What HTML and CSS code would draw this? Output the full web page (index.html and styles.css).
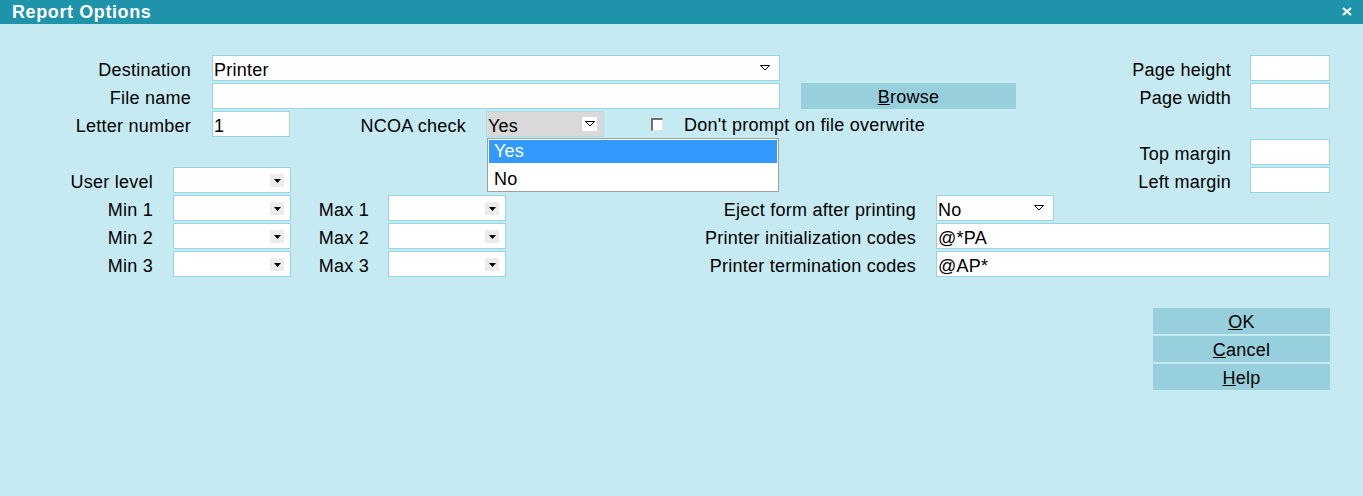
FILE: index.html
```html
<!DOCTYPE html>
<html lang="en">
  <head>
    <meta charset="UTF-8" />
    <title>Report Options</title>
    <link rel="stylesheet" href="styles.css">
  </head>
  <body>
    <div class="dialog">
      <!-- title bar -->
      <div class="titleBar">
        <span class="title">Report Options</span>
        <svg class="closeBtn" width="10" height="9" viewBox="0 0 10 9"><path d="M1 1 L9 8 M9 1 L1 8" stroke="#fff" stroke-width="2.2"/></svg>
      </div>

      <div class="formBody">
        <div class="row">
          <label class="lbl lblA">Destination</label>
          <div class="field wide sel">Printer
            <svg class="arrowOpen" width="10" height="6" viewBox="0 0 10 6"><path d="M0.5 0.5 H9.5 L5 5 Z" fill="none" stroke="#000"/></svg>
          </div>
          <div class="side">
            <label class="lbl lblR">Page height</label>
            <div class="field num"></div>
          </div>
        </div>

        <div class="row">
          <label class="lbl lblA">File name</label>
          <div class="field wide"></div>
          <div class="btn browse"><u>B</u>rowse</div>
          <div class="side">
            <label class="lbl lblR">Page width</label>
            <div class="field num"></div>
          </div>
        </div>

        <div class="row">
          <label class="lbl lblA">Letter number</label>
          <div class="field short">1</div>
          <label class="lbl lblNcoa">NCOA check</label>
          <div class="field combo grey sel">Yes
            <span class="arrowBox white"><svg width="10" height="6" viewBox="0 0 10 6"><path d="M0.5 0.5 H9.5 L5 5 Z" fill="none" stroke="#000"/></svg></span>
            <!-- open list of the NCOA combo -->
            <div class="listBox">
              <div class="item active">Yes</div>
              <div class="item">No</div>
            </div>
          </div>
          <span class="checkBox"></span>
          <span class="checkText">Don't prompt on file overwrite</span>
        </div>

        <div class="row">
          <div class="side">
            <label class="lbl lblR">Top margin</label>
            <div class="field num"></div>
          </div>
        </div>

        <div class="row">
          <label class="lbl lblB">User level</label>
          <div class="field combo sel">
            <span class="arrowBox"><svg width="7" height="4" viewBox="0 0 7 4"><path d="M0 0 H7 L3.5 4 Z" fill="#000"/></svg></span>
          </div>
          <div class="side">
            <label class="lbl lblR">Left margin</label>
            <div class="field num"></div>
          </div>
        </div>

        <div class="row">
          <label class="lbl lblB">Min 1</label>
          <div class="field combo sel">
            <span class="arrowBox"><svg width="7" height="4" viewBox="0 0 7 4"><path d="M0 0 H7 L3.5 4 Z" fill="#000"/></svg></span>
          </div>
          <label class="lbl lblMax">Max 1</label>
          <div class="field combo sel">
            <span class="arrowBox"><svg width="7" height="4" viewBox="0 0 7 4"><path d="M0 0 H7 L3.5 4 Z" fill="#000"/></svg></span>
          </div>
          <label class="lbl lblPrn">Eject form after printing</label>
          <div class="field combo sel">No
            <svg class="arrowOpen" width="10" height="6" viewBox="0 0 10 6"><path d="M0.5 0.5 H9.5 L5 5 Z" fill="none" stroke="#000"/></svg>
          </div>
        </div>

        <div class="row">
          <label class="lbl lblB">Min 2</label>
          <div class="field combo sel">
            <span class="arrowBox"><svg width="7" height="4" viewBox="0 0 7 4"><path d="M0 0 H7 L3.5 4 Z" fill="#000"/></svg></span>
          </div>
          <label class="lbl lblMax">Max 2</label>
          <div class="field combo sel">
            <span class="arrowBox"><svg width="7" height="4" viewBox="0 0 7 4"><path d="M0 0 H7 L3.5 4 Z" fill="#000"/></svg></span>
          </div>
          <label class="lbl lblPrn">Printer initialization codes</label>
          <div class="field fill">@*PA</div>
        </div>

        <div class="row">
          <label class="lbl lblB">Min 3</label>
          <div class="field combo sel">
            <span class="arrowBox"><svg width="7" height="4" viewBox="0 0 7 4"><path d="M0 0 H7 L3.5 4 Z" fill="#000"/></svg></span>
          </div>
          <label class="lbl lblMax">Max 3</label>
          <div class="field combo sel">
            <span class="arrowBox"><svg width="7" height="4" viewBox="0 0 7 4"><path d="M0 0 H7 L3.5 4 Z" fill="#000"/></svg></span>
          </div>
          <label class="lbl lblPrn">Printer termination codes</label>
          <div class="field fill">@AP*</div>
        </div>

        <!-- OK / Cancel / Help -->
        <div class="actions">
          <div class="btn action"><u>O</u>K</div>
          <div class="btn action"><u>C</u>ancel</div>
          <div class="btn action"><u>H</u>elp</div>
        </div>
      </div>
    </div>
  </body>
</html>
```

FILE: styles.css
```css
* {
  margin: 0;
  padding: 0;
  box-sizing: border-box;
}
body {
  background: #c6eaf2;
  font-family: "Liberation Sans", Arial, sans-serif;
  font-size: 18px;
  letter-spacing: 0.25px;
  color: #000;
}
.dialog {
  width: 1363px;
  height: 496px;
  background: #c6eaf2;
}
.titleBar {
  height: 24px;
  background: #1f93a9;
  display: flex;
  align-items: center;
  justify-content: space-between;
  padding: 0 11px 0 12px;
}
.title {
  color: #fff;
  font-weight: bold;
  font-size: 18px;
  letter-spacing: 0.6px;
  line-height: 24px;
}
.closeBtn {
  display: block;
  margin-top: -2px;
}
.formBody {
  padding-top: 31px;
}
.row {
  display: flex;
  height: 26px;
  margin-bottom: 2px;
  padding-right: 33px;
}
.lbl {
  flex: none;
  text-align: right;
  line-height: 30px;
  white-space: nowrap;
}
.lblA {
  width: 191px;
  margin-right: 21px;
}
.lblB {
  width: 153px;
  margin-right: 20px;
}
.lblNcoa {
  width: 176px;
  margin-right: 20px;
}
.lblMax {
  width: 78px;
  margin-right: 19px;
}
.lblPrn {
  width: 410px;
  margin-right: 20px;
}
.lblR {
  margin-right: 19px;
}
.side {
  margin-left: auto;
  display: flex;
}
.field {
  position: relative;
  flex: none;
  height: 26px;
  background: #fff;
  border: 1px solid #97d5e1;
  padding-left: 1px;
  line-height: 28px;
  white-space: nowrap;
}
.wide {
  width: 568px;
}
.short {
  width: 78px;
}
.num {
  width: 80px;
}
.combo {
  width: 118px;
}
.fill {
  flex: 1;
}
.grey {
  background: #d9d9d9;
  border-color: #a9dde8;
}
.arrowOpen {
  position: absolute;
  right: 9px;
  top: 9px;
}
.arrowBox {
  position: absolute;
  right: 6px;
  top: 6px;
  width: 14px;
  height: 13px;
  background: #ececec;
  display: flex;
  align-items: center;
  justify-content: center;
}
.arrowBox.white {
  background: #fff;
  right: 6px;
  top: 5px;
  width: 15px;
  height: 14px;
}
.listBox {
  position: absolute;
  top: 26px;
  left: 0;
  width: 292px;
  height: 54px;
  background: #fff;
  border: 1px solid #a0a0a0;
  padding: 1px;
  overflow: hidden;
  z-index: 10;
}
.listBox .item {
  height: 27px;
  line-height: 33px;
  padding-left: 5px;
}
.listBox .item.active {
  background: #3399ff;
  color: #fff;
  height: 23px;
  line-height: 23px;
}
.checkBox {
  flex: none;
  width: 12px;
  height: 13px;
  margin: 7px 0 0 47px;
  background: #fff;
  border-style: solid;
  border-width: 2px 1px 1px 2px;
  border-color: #6f6f6f #e6e6e6 #e6e6e6 #6f6f6f;
}
.checkText {
  margin-left: 21px;
  line-height: 28px;
  white-space: nowrap;
}
.btn {
  flex: none;
  background: #97d0dc;
  text-align: center;
  line-height: 28px;
  height: 26px;
}
.browse {
  width: 215px;
  margin-left: 21px;
}
.actions {
  margin-top: 31px;
  display: flex;
  flex-direction: column;
  align-items: flex-end;
  gap: 2px;
  padding-right: 33px;
}
.action {
  width: 177px;
}
```
